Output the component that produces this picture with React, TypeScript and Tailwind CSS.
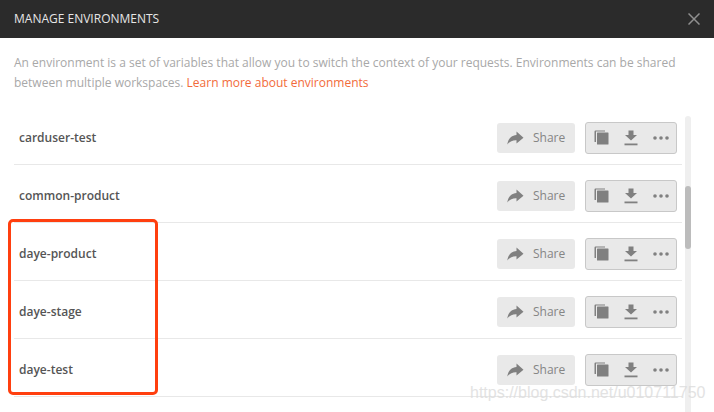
const rows = ["carduser-test", "common-product", "daye-product", "daye-stage", "daye-test"];

function ShareIcon() {
  return (
    <svg width="17" height="14" viewBox="0 0 17 14" fill="#808080">
      <path d="M9.5 0.5 L16.5 6.8 L9.5 12.5 V9.2 C5.5 9 2.5 10.5 0.3 13.5 C1.2 8 4 4.4 9.5 4 Z" />
    </svg>
  );
}

function CopyIcon() {
  return (
    <svg width="15" height="15" viewBox="0 0 15 15" fill="#808080">
      <path d="M0.5 1.5 A1 1 0 0 1 1.5 0.5 H11 V1.5 H2 V12 H1 A0.5 0.5 0 0 1 0.5 11.5 Z" />
      <rect x="3" y="2.5" width="11.5" height="12" rx="0.5" />
    </svg>
  );
}

function DownloadIcon() {
  return (
    <svg width="14" height="16" viewBox="0 0 14 16" fill="#808080">
      <path d="M4.5 0.5 H9.5 V5 H13 L7 10.5 L1 5 H4.5 Z" />
      <rect x="0.5" y="13.5" width="13" height="1.8" />
    </svg>
  );
}

function DotsIcon() {
  return (
    <svg width="16" height="4" viewBox="0 0 16 4" fill="#808080">
      <circle cx="2" cy="2" r="1.8" />
      <circle cx="8" cy="2" r="1.8" />
      <circle cx="14" cy="2" r="1.8" />
    </svg>
  );
}

function Row({ name }: { name: string }) {
  return (
    <div className="h-[58px] flex items-center justify-between border-b border-[#e8e8e8] pl-[5px] pr-[5px] pt-[4px]">
      <span className="text-[12px] font-semibold text-[#555555]">{name}</span>
      <div className="flex items-center gap-[10px]">
        <div className="w-[78px] h-[30px] rounded-[3px] bg-[#e9e9e9] flex items-center pl-[10px] gap-[9px]">
          <ShareIcon />
          <span className="text-[12px] text-[#858585]">Share</span>
        </div>
        <div className="w-[92px] h-[32px] rounded-[3px] bg-[#e9e9e9] border border-[#c8c8c8] flex items-center pl-[8px] pr-[7px] justify-between">
          <CopyIcon />
          <DownloadIcon />
          <DotsIcon />
        </div>
      </div>
    </div>
  );
}

export default function App() {
  return (
    <div className="relative w-[714px] h-[412px] overflow-hidden bg-white font-['Open_Sans',sans-serif]">
      <div className="h-[38px] bg-[#2b2b2b] flex items-center justify-between pl-[14px] pr-[14px]">
        <span className="text-[12px] text-[#e6e6e6]">MANAGE ENVIRONMENTS</span>
        <svg width="12" height="12" viewBox="0 0 12 12" stroke="#8f8f8f" strokeWidth="1.5" fill="none">
          <path d="M0.5 0.5 L11.5 11.5 M11.5 0.5 L0.5 11.5" />
        </svg>
      </div>
      <p className="pl-[14px] pt-[15px] pr-[20px] text-[12px] leading-[20px] text-[#a8a8a8]">
        An environment is a set of variables that allow you to switch the context of your requests. Environments can be shared
        <br />
        between multiple workspaces. <span className="text-[#f26b3a]">Learn more about environments</span>
      </p>
      <div className="flex mt-[13px] pl-[14px]">
        <div className="w-[668px] pt-[1px]">
          {rows.map((r) => (
            <Row key={r} name={r} />
          ))}
        </div>
        <div className="ml-[3px] mt-[10px] w-[6px] h-[296px] bg-[#efefef] rounded-t-[3px] pt-[70px]">
          <div className="h-[63px] rounded-[3px] bg-[#bcbcbc]" />
        </div>
      </div>
      <div className="absolute left-[8px] top-[219px] w-[150px] h-[176px] rounded-[5px] border-[3px] border-[#ff3f0f]" />
      <span className="absolute left-[470px] top-[384px] text-[16px] leading-[18px] font-['Liberation_Sans',sans-serif] text-[#dcdcdc] opacity-80">
        https://blog.csdn.net/u010711750
      </span>
    </div>
  );
}
